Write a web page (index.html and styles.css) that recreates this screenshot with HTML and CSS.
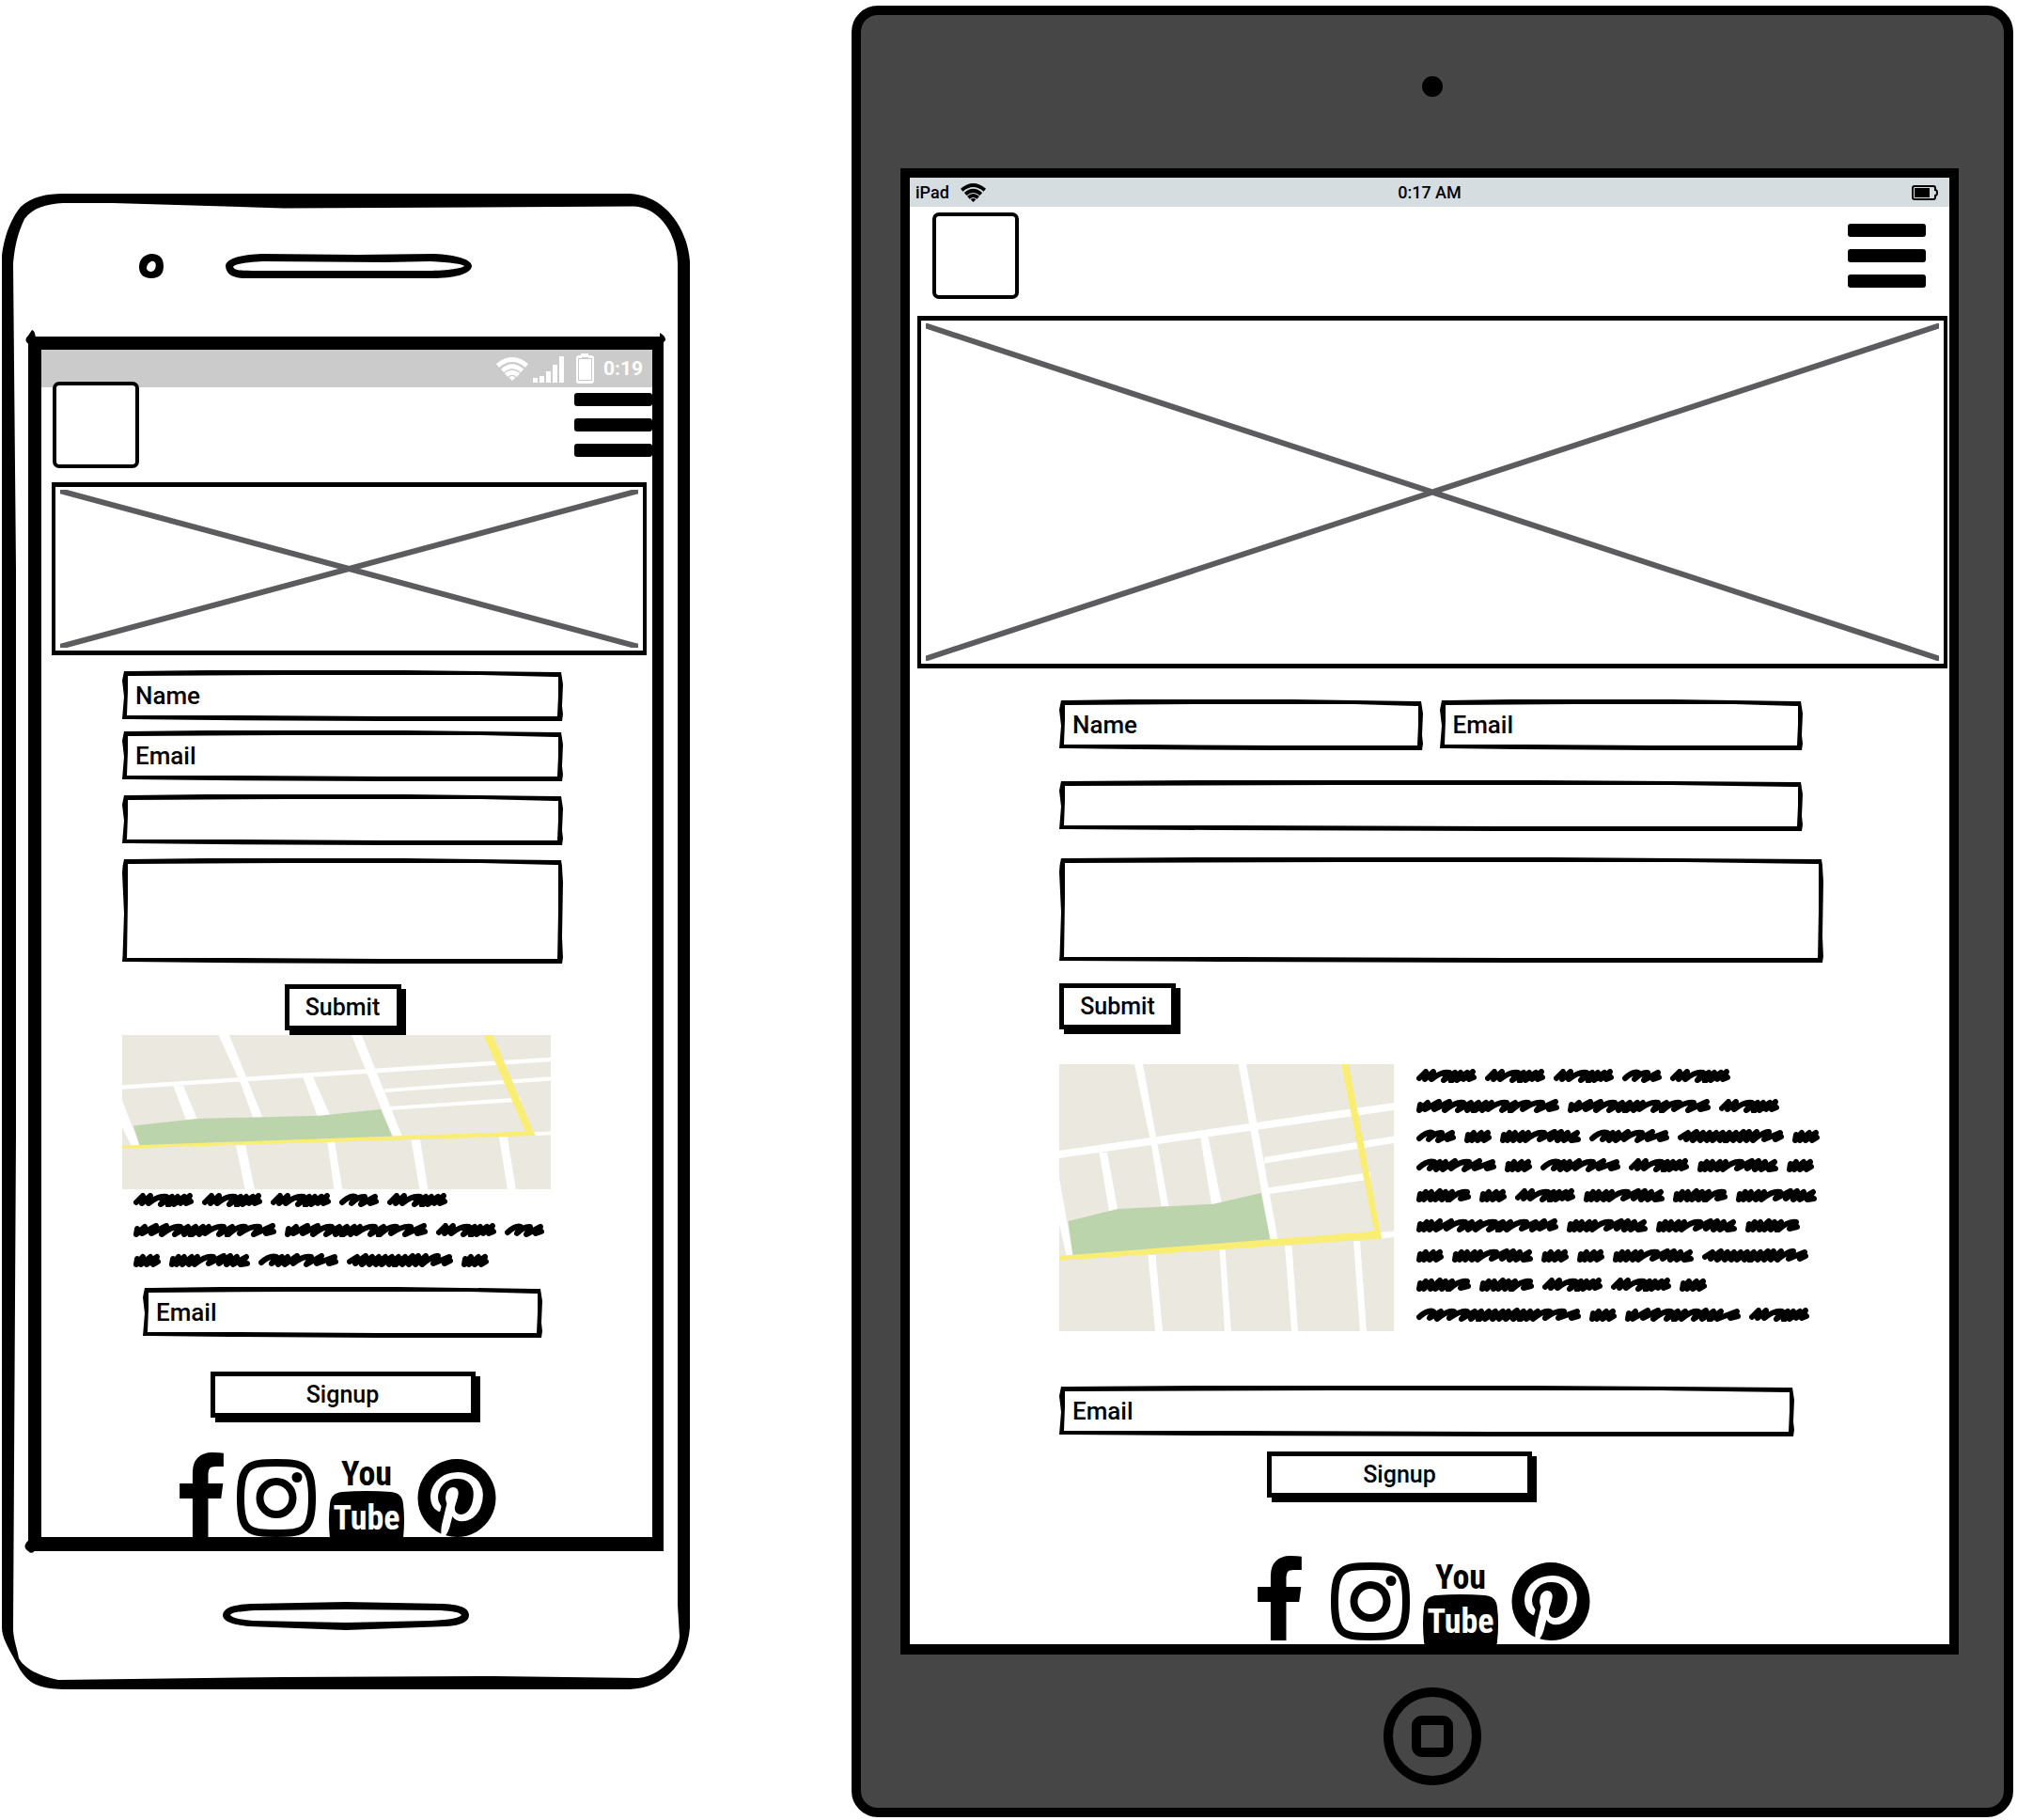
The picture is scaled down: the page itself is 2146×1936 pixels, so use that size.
FILE: index.html
```html
<!DOCTYPE html>
<html lang="en">
<head>
<meta charset="utf-8">
<meta name="viewport" content="width=device-width, initial-scale=1">
<title>Contact page wireframes</title>
<link rel="stylesheet" href="styles.css">
</head>
<body>
<svg class="sprite" aria-hidden="true">
  <!-- street map -->
  <symbol id="map" viewBox="0 0 356 284" preserveAspectRatio="none">
    <path fill="#ebe8e0" d="M0 0h356v284H0z"/>
    <path fill="#fff" d="M0 92L356 41V49L0 100zM80 0H89L116.500 151H108.500L98 87zM190.500 0H199L232.500 186H224.500zM0 121L14.500 203H7.500L0 170zM42.500 94H51L62.500 156H53zM150 77H158.500L173 149H162zM218 99L356 76.500V84L218 105.500zM222 131.500L331 115V122.500L224 138zM94.500 203H102.500L110 284H102zM170.500 197H176.500L183 284H176zM240 193H247.500L254 284H247zM313 188H320L327 284H320zM342 179L356 177.500V184L343 185.500z"/>
    <path fill="#bcd4ac" d="M9.500 167L62 154L164 148.700L214.700 137L224.500 187L14.500 204z"/>
    <path fill="#f9ee73" d="M0 204L335 177.700L300 0H308L343 185.500L0 209z"/>
  </symbol>

  <!-- scribbled words, narrow to wide -->
  <symbol id="w29" viewBox="0 0 29 15"><path d="M4 6L3 12L10 4L8 12L18 4L14 12L25 4L21 12L26 9"/></symbol>
  <symbol id="w42" viewBox="0 0 42 15"><path d="M3 10Q12 2 17 4L13 11Q21 3 27 4L23 12L38 4L33 11L39 9"/></symbol>
  <symbol id="w58" viewBox="0 0 58 15"><path d="M4 6L3 12L10 4L8 12L16 4L15 12L25 3L20 12L31 4L27 12L38 4L34 13Q46 2 54 4L47 11L55 9"/></symbol>
  <symbol id="w64" viewBox="0 0 64 15"><path d="M3 10L10 3L9 11L18 3L16 11Q28 2 35 4L29 12L41 4L37 13L47 4L43 12L54 4L50 11L60 3L56 11L61 9"/></symbol>
  <symbol id="w85" viewBox="0 0 85 15"><path d="M3 10Q12 2 19 4L14 11L25 4L21 12L31 4L28 12L41 3L37 11Q48 2 56 4L51 12L67 3L62 11L81 4L75 11L82 9"/></symbol>
  <symbol id="w86" viewBox="0 0 86 15"><path d="M4 6L3 12L10 4L8 12L16 4L14 12L24 4L21 12L30 4L27 12Q39 2 47 4L42 11L58 3L53 11L65 3L61 12L72 4L68 12L82 4L76 12L83 11"/></symbol>
  <symbol id="w113" viewBox="0 0 113 15"><path d="M3 9L11 4L9 11L20 3L16 12L27 4L24 12L34 4L31 12L41 4L37 12L48 4L45 12L55 4L51 13L62 4L59 12L70 3L66 12L76 3L73 12L84 3L80 12Q93 2 97 3L92 11L109 4L104 11L110 8"/></symbol>
  <symbol id="w123" viewBox="0 0 123 15"><path d="M4 6L3 12L11 4L8 12L24 3L19 11L35 3L30 12Q43 2 49 4L44 12L56 4L52 13L64 4L60 12Q72 2 78 4L73 12L86 3L82 12L94 4L90 13L102 4L98 12L119 4L112 11L120 9"/></symbol>
  <symbol id="w151" viewBox="0 0 151 15"><path d="M4 6L3 12L11 4L8 12L16 4L14 12L25 3L21 12L37 3L32 11Q45 2 52 4L46 12L59 4L55 12L68 4L63 12Q75 2 84 4L77 12L92 4L87 13L100 4L96 12Q109 2 117 4L112 11L127 4L123 12L136 3L131 11L147 3L142 11L148 9"/></symbol>
  <symbol id="w152" viewBox="0 0 152 15"><path d="M4 6L3 12L12 4L9 11L24 3L19 11L35 3L30 12Q43 2 50 4L44 12L58 4L54 12L66 4L61 13L74 4L70 12L80 4L76 11Q89 2 96 4L91 12L105 4L100 13Q112 2 119 4L113 11Q127 2 134 4L128 12L148 3L141 11L149 9"/></symbol>
  <symbol id="w175" viewBox="0 0 175 15"><path d="M3 10Q12 2 18 4L14 11L26 4L22 12Q34 2 40 4L35 11Q49 2 54 4L48 12L62 4L58 12L69 4L66 13L77 4L73 12L84 4L81 12L92 4L88 12L98 4L95 12L107 3L103 12L114 4L110 13L121 4L117 12L129 4L124 12Q136 2 142 4L137 11Q150 2 157 4L151 11L171 4L165 11L172 9"/></symbol>

  <!-- social marks -->
  <symbol id="facebook" viewBox="479 0 864 1664"><path d="M1343 12v264h-157q-86 0-116 36t-30 108v189h293l-39 296h-254v759h-306v-759h-255v-296h255v-218q0-186 104-288.500t277-102.500q147 0 228 12z"/></symbol>
  <symbol id="instagram" viewBox="0 0 84 83">
    <path fill="none" stroke="#000" stroke-width="8" d="M42 4C71 4 80 6 80 41.500S71 79 42 79S4 77 4 41.500S13 4 42 4z"/>
    <circle cx="42" cy="41.500" r="17.500" fill="none" stroke="#000" stroke-width="8"/><circle cx="64" cy="19.500" r="5.500"/>
  </symbol>
  <symbol id="pinterest" viewBox="128 128 1536 1536"><path d="M1664 896q0 209-103 385.500t-279.500 279.500-385.500 103q-111 0-218-32 59-93 78-164 9-34 54-211 20 39 73 67.500t114 28.500q121 0 216-68.500t147-188.500 52-270q0-114-59.500-214t-172.500-163-255-63q-105 0-196 29t-154.500 77-109 110.500-67 129.500-21.500 134q0 104 40 183t117 111q30 12 38-20 2-7 8-31t8-30q6-23-11-43-51-61-51-151 0-151 104.500-259.500t273.500-108.500q151 0 235.500 82t84.500 213q0 170-68.500 289t-175.500 119q-61 0-98-43.500t-23-104.500q8-35 26.500-93.500t30-103 11.500-75.500q0-50-27-83t-77-33q-62 0-105 57t-43 142q0 73 25 122l-99 418q-17 70-13 177-206-91-333-281t-127-423q0-209 103-385.500t279.500-279.500 385.500-103 385.500 103 279.500 279.500 103 385.500z"/></symbol>

  <symbol id="wifi" viewBox="0 0 34 25">
    <path d="M17 25L13.500 21.500Q17 18.500 20.500 21.500z"/>
    <path fill="none" stroke="currentColor" stroke-width="5" d="M1.500 9Q17 -4 32.500 9M6.500 14.500Q17 5 27.500 14.500M10.500 19Q17 13.500 23.500 19"/>
  </symbol>
</svg>

<main class="board">
  <section class="phone" aria-label="Phone">
    <div class="phone-top">
      <svg width="26" height="26" viewBox="0 0 26 26" aria-hidden="true"><path fill-rule="evenodd" d="M13 0C22 0 26 5 26 13S22 26 13 26S0 21 0 14S4 1 13 0zM13 8C9 10 8 13 8 16C10 20 15 20 17 16C19 11 17 7 13 8z"/></svg>
      <svg width="262" height="26" viewBox="0 0 262 26" aria-hidden="true"><path fill-rule="evenodd" d="M38 0L140 1L222 0C245 1 262 6 262 13C261 22 242 26 220 26H22C8 26 0 22 0 12C2 5 16 1 38 0zM40 8C22 9 9 11 8 14C10 17 12 18 28 18H215C238 18 252 15 254 13C252 11 240 9 218 8L170 9z"/></svg>
    </div>
    <div class="screen phone-screen">
      <div class="phone-status">
        <svg width="34" height="25"><use href="#wifi"/></svg>
        <svg width="33" height="29" viewBox="0 0 33 29"><path d="M0 24h5v5H0zM7 22h5v7H7zM14 17h5v12h-5zM21 10h5v19h-5zM28 1h5v28h-5z"/></svg>
        <svg class="phone-battery" width="19" height="32" viewBox="0 0 19 32"><path fill-rule="evenodd" d="M5 0H13V2H16Q19 2 19 5V29Q19 32 16 32H3Q0 32 0 29V5Q0 2 3 2H5zM2 5V29H17V5H13V4H6V5zM3 6H16V28H3z"/></svg>
        <span>0:19</span>
      </div>
      <header class="bar phone-bar">
        <a class="logo" href="#" aria-label="Home"></a>
        <button class="burger" type="button" aria-label="Menu"><i></i><i></i><i></i></button>
      </header>
      <div class="hero phone-hero"><svg viewBox="0 0 100 100" preserveAspectRatio="none"><path d="M-1 -0.300L101 100.300M-1 100.300L101 -0.300"/></svg></div>
      <form class="phone-form">
        <input class="field" type="text" aria-label="Name" placeholder="Name">
        <input class="field" type="email" aria-label="Email" placeholder="Email">
        <input class="field" type="text" aria-label="Subject">
        <textarea class="field area" aria-label="Message"></textarea>
        <button class="btn" type="button">Submit</button>
      </form>
      <svg class="phone-map" role="img" aria-label="Map"><use href="#map"/></svg>
      <div class="scribble phone-scribble" aria-hidden="true">
        <svg width="64"><use href="#w64"/></svg><svg width="64"><use href="#w64"/></svg><svg width="64"><use href="#w64"/></svg><svg width="42"><use href="#w42"/></svg><svg width="64"><use href="#w64"/></svg>
        <svg width="152"><use href="#w152"/></svg><svg width="152"><use href="#w152"/></svg><svg width="64"><use href="#w64"/></svg><svg width="42"><use href="#w42"/></svg>
        <svg width="29"><use href="#w29"/></svg><svg width="86"><use href="#w86"/></svg><svg width="85"><use href="#w85"/></svg><svg width="113"><use href="#w113"/></svg><svg width="29"><use href="#w29"/></svg>
      </div>
      <form class="phone-signup">
        <input class="field" type="email" aria-label="Newsletter email" placeholder="Email">
        <button class="btn btn-wide" type="button">Signup</button>
      </form>
      <nav class="social phone-social">
        <a href="#" aria-label="Facebook"><svg width="47" height="90"><use href="#facebook"/></svg></a>
        <a href="#" aria-label="Instagram"><svg width="84" height="83"><use href="#instagram"/></svg></a>
        <a class="tall" href="#" aria-label="YouTube"><svg width="80" height="104" viewBox="0 0 80 104">
          <path d="M14 42Q40 40 66 42Q78 43 79 55Q81 72 79 91Q78 103 66 104H14Q2 103 1 91Q-1 72 1 55Q2 43 14 42z"/>
          <text x="40" y="35" class="mark">You</text>
          <text x="40" y="82" class="mark mark-light">Tube</text>
        </svg></a>
        <a href="#" aria-label="Pinterest"><svg width="84" height="83"><use href="#pinterest"/></svg></a>
      </nav>
    </div>
    <div class="phone-bottom">
      <svg width="262" height="30" viewBox="0 0 262 30" aria-hidden="true"><path fill-rule="evenodd" d="M30 2L131 0L235 2C254 3 262 7 262 14C262 21 254 25 238 26L131 30L28 26C8 24 0 20 0 14C1 6 10 3 30 2zM35 9C20 10 9 11 8 14C10 17 18 19 32 20L131 22L222 20C242 19 252 17 254 14C252 11 245 10 232 9L131 8z"/></svg>
    </div>
  </section>

  <section class="tablet" aria-label="Tablet">
    <div class="tablet-top"><span class="lens"></span></div>
    <div class="screen tablet-screen">
      <div class="tablet-status">
        <span class="carrier">iPad <svg width="27" height="20"><use href="#wifi"/></svg></span>
        <span>0:17 AM</span>
        <svg class="tablet-battery" width="28" height="16" viewBox="0 0 28 16"><path fill="none" stroke="#000" stroke-width="2" d="M3 1H23Q25 1 25 3V5Q27 5 27 8T25 11V13Q25 15 23 15H3Q1 15 1 13V3Q1 1 3 1z"/><path d="M3 3H19V13H3z"/></svg>
      </div>
      <header class="bar tablet-bar">
        <a class="logo" href="#" aria-label="Home"></a>
        <button class="burger" type="button" aria-label="Menu"><i></i><i></i><i></i></button>
      </header>
      <div class="hero tablet-hero"><svg viewBox="0 0 100 100" preserveAspectRatio="none"><path d="M-1 -0.300L101 100.300M-1 100.300L101 -0.300"/></svg></div>
      <div class="tablet-body">
        <form class="tablet-form">
          <div class="pair">
            <input class="field" type="text" aria-label="Name" placeholder="Name">
            <input class="field" type="email" aria-label="Email" placeholder="Email">
          </div>
          <div class="single"><input class="field" type="text" aria-label="Subject"></div>
          <textarea class="field area" aria-label="Message"></textarea>
          <button class="btn" type="button">Submit</button>
        </form>
        <div class="info">
          <svg class="tablet-map" role="img" aria-label="Map"><use href="#map"/></svg>
          <div class="scribble tablet-scribble" aria-hidden="true">
            <svg width="64"><use href="#w64"/></svg><svg width="64"><use href="#w64"/></svg><svg width="64"><use href="#w64"/></svg><svg width="42"><use href="#w42"/></svg><svg width="64"><use href="#w64"/></svg>
            <svg width="152"><use href="#w152"/></svg><svg width="152"><use href="#w152"/></svg><svg width="64"><use href="#w64"/></svg>
            <svg width="42"><use href="#w42"/></svg><svg width="29"><use href="#w29"/></svg><svg width="86"><use href="#w86"/></svg><svg width="85"><use href="#w85"/></svg><svg width="113"><use href="#w113"/></svg><svg width="29"><use href="#w29"/></svg>
            <svg width="85"><use href="#w85"/></svg><svg width="29"><use href="#w29"/></svg><svg width="85"><use href="#w85"/></svg><svg width="64"><use href="#w64"/></svg><svg width="86"><use href="#w86"/></svg><svg width="29"><use href="#w29"/></svg>
            <svg width="58"><use href="#w58"/></svg><svg width="29"><use href="#w29"/></svg><svg width="64"><use href="#w64"/></svg><svg width="86"><use href="#w86"/></svg><svg width="58"><use href="#w58"/></svg><svg width="86"><use href="#w86"/></svg>
            <svg width="151"><use href="#w151"/></svg><svg width="86"><use href="#w86"/></svg><svg width="86"><use href="#w86"/></svg><svg width="58"><use href="#w58"/></svg>
            <svg width="29"><use href="#w29"/></svg><svg width="86"><use href="#w86"/></svg><svg width="29"><use href="#w29"/></svg><svg width="29"><use href="#w29"/></svg><svg width="86"><use href="#w86"/></svg><svg width="113"><use href="#w113"/></svg>
            <svg width="58"><use href="#w58"/></svg><svg width="58"><use href="#w58"/></svg><svg width="64"><use href="#w64"/></svg><svg width="64"><use href="#w64"/></svg><svg width="29"><use href="#w29"/></svg>
            <svg width="175"><use href="#w175"/></svg><svg width="29"><use href="#w29"/></svg><svg width="123"><use href="#w123"/></svg><svg width="64"><use href="#w64"/></svg>
          </div>
        </div>
        <form class="tablet-signup">
          <input class="field" type="email" aria-label="Newsletter email" placeholder="Email">
          <button class="btn btn-wide" type="button">Signup</button>
        </form>
      </div>
      <nav class="social tablet-social">
        <a class="apart" href="#" aria-label="Facebook"><svg width="47" height="90"><use href="#facebook"/></svg></a>
        <a href="#" aria-label="Instagram"><svg width="84" height="83"><use href="#instagram"/></svg></a>
        <a class="tall" href="#" aria-label="YouTube"><svg width="80" height="104" viewBox="0 0 80 104">
          <path d="M14 42Q40 40 66 42Q78 43 79 55Q81 72 79 91Q78 103 66 104H14Q2 103 1 91Q-1 72 1 55Q2 43 14 42z"/>
          <text x="40" y="35" class="mark">You</text>
          <text x="40" y="82" class="mark mark-light">Tube</text>
        </svg></a>
        <a href="#" aria-label="Pinterest"><svg width="84" height="83"><use href="#pinterest"/></svg></a>
      </nav>
    </div>
    <div class="tablet-bottom"><button class="home" type="button" aria-label="Home button"><i></i></button></div>
  </section>
</main>
</body>
</html>
```
FILE: styles.css
```css
*, *::before, *::after { box-sizing: border-box; }

body {
  margin: 0;
  background: #fff;
  color: #000;
  font: 500 26px/32px Roboto, "Liberation Sans", sans-serif;
}

svg { display: block; flex: none; }
.sprite { position: absolute; width: 0; height: 0; }

.board {
  display: grid;
  grid-template-columns: minmax(0, 732fr) minmax(0, 1236fr);
  column-gap: 172px;
  align-items: start;
  padding: 6px 4px 4px 2px;
}

.screen {
  display: flex;
  flex-direction: column;
  overflow: hidden;
  border: 10px solid #000;
  background: #fff;
}

/* shared pieces */
.bar { display: flex; justify-content: space-between; align-items: flex-start; }

.logo {
  width: 92px;
  height: 92px;
  border: 4px solid #000;
  border-radius: 7px;
  background: #fff;
}

.burger {
  display: grid;
  gap: 13px;
  width: 83px;
  margin: 12px 0 0;
  padding: 0;
  border: 0;
  background: none;
}
.burger i { height: 14px; border-radius: 3px; background: #000; }

.hero { border: 5px solid #000; border-width: 5px 4px; padding: 3px 5px; }
.hero svg { width: 100%; height: 100%; }
.hero path { fill: none; stroke: #5c5c5e; stroke-width: 6; vector-effect: non-scaling-stroke; }

.field {
  display: block;
  width: 100%;
  height: 54px;
  margin: 0;
  padding: 0 6px;
  border: 8px solid transparent;
  border-image: url("data:image/svg+xml,%3Csvg xmlns='http://www.w3.org/2000/svg' width='468' height='54'%3E%3Cpath fill-rule='evenodd' d='M2 1L90 0H300L466 2L468 15L467 38L468 47L467 54L276 54L100 53L0 52L2 28L0 11zM6 6L175 5L300 5L381 5L463 7L463 27L462 49L276 49L109 48L5 48L6 22z'/%3E%3C/svg%3E") 8 / 8px stretch;
  border-radius: 0;
  outline: 0;
  background: none;
  color: #000;
  font: inherit;
  resize: none;
}
.field::placeholder { color: #000; opacity: 1; }
.area { height: 112px; }

.btn {
  display: block;
  width: 124px;
  height: 49px;
  margin: 0 5px 5px 0;
  padding: 0;
  border: 5px solid #000;
  background: #fff;
  box-shadow: 5px 5px 0 #000;
  color: #000;
  font: inherit;
  font-size: 25px;
}
.btn-wide { width: 282px; }

.scribble {
  display: flex;
  flex-wrap: wrap;
  align-content: space-between;
  column-gap: 9px;
  fill: none;
  stroke: #000;
  stroke-width: 6px;
  stroke-linecap: round;
  stroke-linejoin: round;
}
.scribble svg { height: 15px; }

.social { display: flex; align-items: flex-end; justify-content: center; gap: 14px; height: 90px; }
.social a { color: #000; }
.social .tall { align-self: flex-start; }
.mark {
  font: 700 36px/36px "Liberation Sans Narrow", "Roboto Condensed", "Liberation Sans", sans-serif;
  text-anchor: middle;
}
.mark-light { fill: #fff; }

/* phone */
.phone {
  margin-top: 200px;
  padding: 0 28px;
  background: url("data:image/svg+xml,%3Csvg xmlns='http://www.w3.org/2000/svg' viewBox='0 0 732 1590' preserveAspectRatio='none'%3E%3Cpath fill-rule='evenodd' d='M0 66C2 46 10 26 20 14C32 3 48 0 65 0H668C705 2 729 35 732 72V1524C729 1562 706 1588 668 1590H65C40 1589 27 1585 16 1563C6 1544 0 1535 0 1524zM12 74C14 52 18 40 24 27C33 15 47 11 65 10H118L300 15.500L672 13.500C700 15 718 42 719 74V1500L721 1534C719 1556 700 1576 677 1578L524 1576L300 1577L60 1580C40 1576 24 1568 18 1557C16 1545 13 1540 12 1527L15 1000V400z'/%3E%3Cpath d='M32 145Q36 146 36 156L30 161Q22 156 28 151zM700 148Q706 151 706 156L700 162zM30 1430Q20 1438 28 1443Q33 1448 36 1440z'/%3E%3C/svg%3E") 0 0 / 100% 100% no-repeat;
}
.phone-top { display: flex; gap: 66px; height: 152px; padding: 64px 0 0 118px; }
.phone-screen { border-width: 14px 12px 15px 14px; }
.phone-status {
  display: flex;
  align-items: center;
  justify-content: flex-end;
  gap: 5px;
  height: 40px;
  padding-right: 10px;
  background: #cbcbcb;
  color: #fff;
  fill: #fff;
  font-size: 21px;
  font-weight: 700;
}
.phone-battery { margin: 0 5px 0 8px; }
.phone-bar { margin-top: -6px; padding-left: 12px; }
.phone-hero { height: 184px; margin: 15px 6px 0 11px; }
.phone-form { display: grid; gap: 14px; margin: 16px 95px 0 86px; }
.phone-form .field + [type="email"] { margin-top: -4px; }
.phone-form .btn { justify-self: center; margin: 8px 0 5px; }
.phone-map { width: auto; height: 164px; margin: 0 108px 0 86px; }
.phone-map, .tablet-map { overflow: hidden; }
.phone-scribble { height: 79px; margin: 4px 110px 0 98px; }
.phone-signup { display: grid; gap: 36px; margin: 21px 117px 0 108px; }
.phone-signup .btn { justify-self: center; margin-right: 0; }
.phone-social { margin-top: 32px; padding-right: 20px; }
.phone-bottom { display: flex; justify-content: center; height: 147px; padding: 54px 0 0; }

/* tablet */
.tablet {
  padding: 0 48px 0 42px;
  border: 10px solid #000;
  border-radius: 28px;
  background: #464646;
}
.tablet-top { display: flex; justify-content: center; height: 163px; padding: 65px 0 0 6px; }
.lens { width: 22px; height: 22px; border-radius: 50%; background: #000; }
.tablet-screen { border-bottom-width: 11px; }
.tablet-status {
  display: grid;
  grid-template-columns: 1fr auto 1fr;
  align-items: center;
  height: 31px;
  padding: 0 12px 0 6px;
  background: #d6dde0;
  font-size: 18px;
}
.tablet-status > :nth-child(2) { padding-left: 6px; }
.carrier { display: flex; align-items: center; gap: 12px; }
.tablet-battery { justify-self: end; }
.tablet-bar { padding: 6px 25px 0 24px; }
.tablet-hero { height: 375px; margin: 18px 2px 0 8px; }
.tablet-body { margin: 33px 134px 0 159px; }
.pair { display: grid; grid-template-columns: 1fr 1fr; gap: 18px; margin-right: 22px; }
.single { margin: 32px 22px 28px 0; }
.tablet-form .btn { margin-top: 22px; }
.info { display: flex; gap: 24px; margin-top: 37px; }
.tablet-map { flex: 1; width: 0; height: 284px; }
.tablet-scribble { width: 433px; height: 269px; margin-top: 5px; }
.tablet-signup { margin-top: 58px; }
.tablet-signup .field { width: auto; min-width: calc(100% - 31px); }
.tablet-signup .btn { margin: 16px auto 5px 221px; }
.tablet-social { height: 94px; margin-top: 57px; padding: 0 13px 4px 0; }
.social .apart { margin-right: 17px; }
.tablet-bottom { display: flex; justify-content: center; height: 163px; padding: 35px 0 0 6px; }
.home {
  display: grid;
  place-content: center;
  width: 104px;
  height: 104px;
  padding: 0;
  border: 10px solid #000;
  border-radius: 50%;
  background: none;
}
.home i { width: 44px; height: 44px; border: 10px solid #000; border-radius: 11px; }
```
